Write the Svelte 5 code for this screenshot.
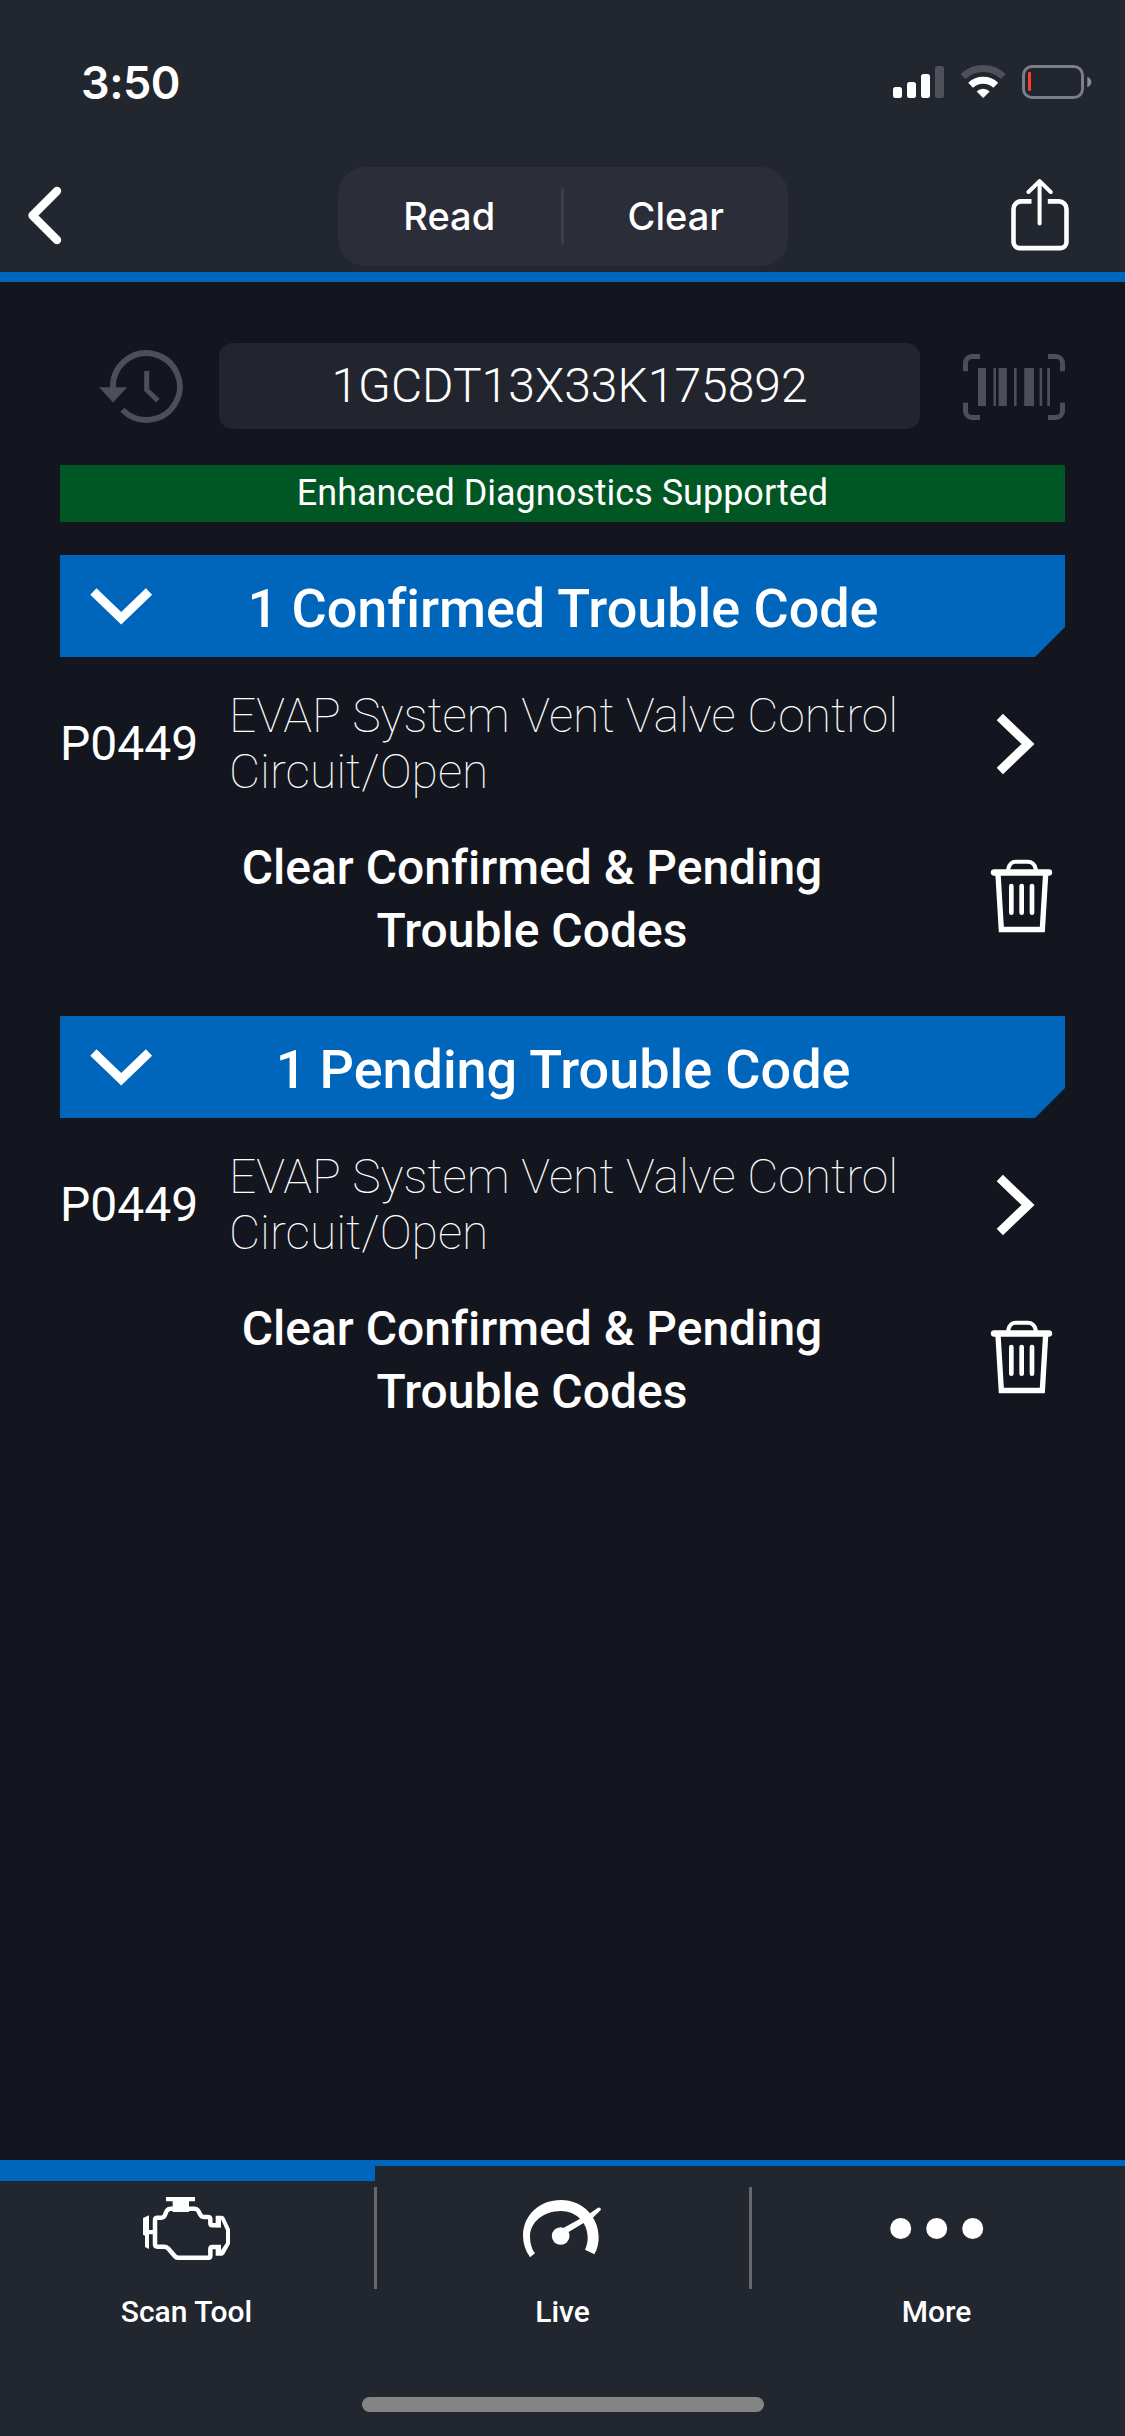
<script lang="ts">
  interface TroubleCode {
    code: string;
    description: string;
  }

  interface CodeGroup {
    title: string;
    codes: TroubleCode[];
  }

  const vin = "1GCDT13X33K175892";

  const description = "EVAP System Vent Valve Control Circuit/Open";

  const groups: CodeGroup[] = [
    { title: "1 Confirmed Trouble Code", codes: [{ code: "P0449", description }] },
    { title: "1 Pending Trouble Code", codes: [{ code: "P0449", description }] },
  ];

  const tabs = [
    { id: "scan", label: "Scan Tool" },
    { id: "live", label: "Live" },
    { id: "more", label: "More" },
  ];

  let activeTab = $state("scan");
</script>

<div class="screen">
  <header>
    <div class="status-bar">
      <span class="time">3:50</span>
      <svg class="status-icons" width="200" height="36" viewBox="0 0 200 36">
        <rect x="1" y="23" width="9" height="11" rx="2.5" fill="#fff" />
        <rect x="15" y="18" width="9" height="16" rx="2.5" fill="#fff" />
        <rect x="29" y="10" width="9" height="24" rx="2.5" fill="#fff" />
        <rect x="43" y="2" width="9" height="32" rx="2.5" fill="#4e5159" />
        <path d="M71 12.6a29 29 0 0 1 40.4 0" fill="none" stroke="#4e5159" stroke-width="7" />
        <path d="M78.6 21.2a18.4 18.4 0 0 1 25.2 0" fill="none" stroke="#fff" stroke-width="7" />
        <path d="M84.7 27.4a9.4 9.4 0 0 1 13 0L91.2 34z" fill="#fff" />
        <rect x="131.5" y="2.5" width="59" height="31" rx="8.5" fill="none" stroke="#7b7e84" stroke-width="3" />
        <path d="M195.3 12.7q4 1.8 4 5.3t-4 5.3z" fill="#8b8d93" />
        <rect x="136" y="8" width="3" height="19" rx="1" fill="#ff3b30" />
      </svg>
    </div>

    <nav class="nav-bar">
      <button class="icon-button" aria-label="Back">
        <svg width="36" height="60" viewBox="0 0 36 60">
          <path
            d="M31 5 6.5 29.5 31 54"
            fill="none"
            stroke="#fff"
            stroke-width="8.4"
            stroke-linecap="round"
            stroke-linejoin="round"
          />
        </svg>
      </button>
      <div class="segmented">
        <button>Read</button>
        <span class="separator"></span>
        <button>Clear</button>
      </div>
      <button class="icon-button share" aria-label="Share">
        <svg width="58" height="72" viewBox="0 0 58 72">
          <g fill="none" stroke="#fff" stroke-linecap="round" stroke-linejoin="round">
            <path
              d="M20.5 22.4H10a7.5 7.5 0 0 0-7.5 7.5v33.2a6 6 0 0 0 6 6h41a6 6 0 0 0 6-6V29.9a7.5 7.5 0 0 0-7.5-7.5H36.8"
              stroke-width="4.6"
              stroke-linecap="butt"
            />
            <path d="M28.6 44.5V2.5M17.5 13 28.6 2.1l11.1 10.9" stroke-width="4" />
          </g>
        </svg>
      </button>
    </nav>
  </header>

  <main>
    <div class="vin-row">
      <svg class="history" width="85" height="73" viewBox="0 0 85 73">
        <path d="M14 38A33.4 33.4 0 1 1 23.4 59.8" fill="none" stroke="#4c4f57" stroke-width="5.8" />
        <path d="M0 37.2h28.2L14.1 52.5z" fill="#4c4f57" />
        <path d="M47.7 21v19l11.2 10.6" fill="none" stroke="#4c4f57" stroke-width="5" />
      </svg>
      <div class="vin">{vin}</div>
      <svg class="barcode" width="102" height="66" viewBox="0 0 102 66">
        <path
          d="M17 2.5H9a6.5 6.5 0 0 0-6.5 6.5v8.3M85 2.5h8A6.5 6.5 0 0 1 99.5 9v8.3M17 63.5H9A6.5 6.5 0 0 1 2.5 57v-8.3M85 63.5h8a6.5 6.5 0 0 0 6.5-6.5v-8.3"
          fill="none"
          stroke="#4c4f57"
          stroke-width="5"
        />
        <path
          d="M15 14h8v38h-8zM30.5 14H33v38h-2.5zM35.6 14h8.2v38h-8.2zM51 14h2.6v38H51zM61.2 14H71v38h-9.8zM76.6 14h2.6v38h-2.6zM84.2 14H87v38h-2.8z"
          fill="#4c4f57"
        />
      </svg>
    </div>

    <div class="support-banner">Enhanced Diagnostics Supported</div>

    {#each groups as group}
      <section>
        <div class="group-header">
          <svg width="63" height="37" viewBox="0 0 63 37">
            <path d="M3.4 3.5 31.2 30.3 59 3.5" fill="none" stroke="#fff" stroke-width="9" />
          </svg>
          <h2>{group.title}</h2>
        </div>

        {#each group.codes as item}
          <div class="code-row">
            <span class="code">{item.code}</span>
            <span class="description">{item.description}</span>
            <svg width="39" height="62" viewBox="0 0 39 62">
              <path d="M3.8 4 32 31 3.8 58" fill="none" stroke="#fff" stroke-width="9" />
            </svg>
          </div>
        {/each}

        <div class="clear-row">
          <span class="clear-label">Clear Confirmed &amp; Pending Trouble Codes</span>
          <svg width="90" height="90" viewBox="0 0 270 270">
            <g fill="none" stroke="#fff" stroke-linecap="round">
              <path d="M85 64V56q5-21 22-21h36q19 0 24 21v8" stroke-width="12" stroke-linecap="butt" />
              <path d="M42 67.5H207" stroke-width="19" />
              <path d="M54 72 64 238.5H187L197 72" stroke-width="16" stroke-linecap="butt" />
              <path d="M94 108v80M125 108v80M156 108v80" stroke-width="14" />
            </g>
          </svg>
        </div>
      </section>
    {/each}
  </main>

  <footer>
    <div class="tabs">
      {#each tabs as tab}
        <button
          class="tab {tab.id}"
          class:active={activeTab === tab.id}
          onclick={() => (activeTab = tab.id)}
        >
          {#if tab.id === "scan"}
            <svg width="100" height="76" viewBox="0 0 300 228">
              <path d="M90 21h87v13h-18v18h-49V34H90z" fill="#fff" />
              <path
                d="M255 105.5h-26q-6 0-6-6V88q0-7-7-7h-12q-8 0-11-7l-6-11q-4-7-11-7h-71q-9 0-13 7l-5 12q-3 8-11 8H64q-7 0-7 7v73q0 7 7 7h20q7 0 12 5l20 23q4 5 10 5h91q6 0 6-6v-20q0-6 6-6h26"
                fill="none"
                stroke="#fff"
                stroke-width="13.5"
              />
              <path
                d="M239 77h18q6 0 8 5l17 36v43l-17 31q-3 5-8 5h-18v-32h16v16l15-22v-38l-15-33v24h-16z"
                fill="#fff"
              />
              <path d="M52 120v13H39v44l-12-6v-34l-6-3V84l18-8v44z" fill="#fff" />
              <path d="M110 50h49v16h-49z" fill="#fff" />
            </svg>
          {:else if tab.id === "live"}
            <svg width="100" height="76" viewBox="0 0 300 228">
              <path
                d="M42 202A114 114 0 0 1 21 138C21 74 72 30 135 30c65 0 113 51 113 112 0 18-4 37-13 51l-28-14c6-12 8-24 8-37 0-44-34-79-80-79-52 0-93 33-93 77 0 19 5 37 15 50z"
                fill="#fff"
              />
              <circle cx="134" cy="138" r="26.5" fill="#fff" />
              <path d="M138 116 222 70 246 53q8-2 9 6l-22 22-84 50z" fill="#fff" />
            </svg>
          {:else}
            <svg width="100" height="76" viewBox="0 0 100 76">
              <circle cx="13.7" cy="38.5" r="10.5" fill="#fff" />
              <circle cx="49.7" cy="38.5" r="10.5" fill="#fff" />
              <circle cx="85.7" cy="38.5" r="10.5" fill="#fff" />
            </svg>
          {/if}
          <span>{tab.label}</span>
        </button>
        {#if tab.id !== "more"}
          <div class="divider"></div>
        {/if}
      {/each}
    </div>
    <div class="home-indicator"></div>
  </footer>
</div>

<style>
  :global(body) {
    margin: 0;
    background: #13161e;
  }

  .screen {
    display: flex;
    flex-direction: column;
    width: 1125px;
    height: 2436px;
    overflow: hidden;
    background: #13161e;
    color: #fff;
    font-family: Roboto, sans-serif;
    font-variant-ligatures: none;
  }

  button {
    padding: 0;
    border: 0;
    background: none;
    color: inherit;
    font: inherit;
  }

  svg {
    display: block;
    flex-shrink: 0;
  }

  header {
    box-sizing: border-box;
    height: 282px;
    border-bottom: 10px solid #0066bb;
    background: #22262e;
    font-family: Inter, sans-serif;
  }

  .status-bar {
    display: flex;
    justify-content: space-between;
    align-items: center;
    height: 164px;
    padding: 0 33px 0 81px;
  }

  .time {
    font-size: 45px;
    font-weight: 600;
    letter-spacing: -0.5px;
  }

  .nav-bar {
    display: flex;
    justify-content: space-between;
    align-items: center;
    height: 104px;
    padding: 0 56px 0 26px;
  }

  .segmented {
    display: flex;
    align-items: center;
    width: 450px;
    height: 99px;
    margin-left: 52px;
    border-radius: 27px;
    background: #2b2e38;
  }

  .segmented button {
    flex: 1;
    font-size: 38px;
    font-weight: 500;
  }

  .separator {
    width: 3px;
    height: 57px;
    border-radius: 2px;
    background: #3b3e48;
  }

  .share {
    margin-top: -3px;
  }

  main {
    flex: 1;
    padding: 61px 60px 0;
  }

  .vin-row {
    display: flex;
    align-items: center;
    height: 86px;
  }

  .history {
    margin: 1px 35px 0 39px;
  }

  .vin {
    width: 701px;
    height: 86px;
    border-radius: 14px;
    background: #22252e;
    font-size: 48px;
    font-weight: 300;
    line-height: 86px;
    text-align: center;
  }

  .barcode {
    margin: 1px 0 0 auto;
  }

  .support-banner {
    height: 57px;
    margin: 36px 0 33px;
    background: #005724;
    font-size: 36px;
    line-height: 57px;
    text-align: center;
  }

  section {
    margin-bottom: 49px;
  }

  .group-header {
    display: flex;
    align-items: center;
    box-sizing: border-box;
    height: 102px;
    padding: 0 92px 0 30px;
    background: #0066bb;
    clip-path: polygon(0 0, 100% 0, 100% 72px, calc(100% - 30px) 100%, 0 100%);
  }

  h2 {
    flex: 1;
    margin: 4px 0 0;
    font-size: 54px;
    font-weight: 500;
    letter-spacing: -0.06px;
    text-align: center;
  }

  .code-row {
    display: flex;
    align-items: center;
    height: 174px;
    padding-right: 30px;
    font-size: 48px;
  }

  .code {
    width: 169px;
    margin-top: -2px;
  }

  .description {
    width: 700px;
    margin-right: auto;
    font-weight: 100;
    line-height: 56px;
  }

  .clear-row {
    display: flex;
    align-items: center;
    justify-content: flex-end;
    height: 136px;
  }

  .clear-label {
    width: 640px;
    margin-right: 128px;
    font-size: 48px;
    font-weight: 500;
    line-height: 63px;
    text-align: center;
  }

  .clear-row svg {
    margin: -9px -5px 0 0;
  }

  footer {
    box-sizing: border-box;
    height: 276px;
    border-top: 6px solid #0066bb;
    background: #22262e;
  }

  .tabs {
    display: flex;
    height: 231px;
  }

  .tab {
    display: flex;
    flex: 1;
    flex-direction: column;
    align-items: center;
    box-sizing: border-box;
    border-top: 15px solid transparent;
  }

  .tab.active {
    border-top-color: #0066bb;
  }

  /* zero net width, so the three tabs stay equal */
  .divider {
    width: 3px;
    height: 102px;
    margin: 21px -2px 0 -1px;
    background: #66686e;
  }

  .tab svg {
    margin-top: 9px;
  }

  .tab.scan svg {
    margin-right: 4px;
  }

  .tab.live svg {
    margin-left: 6px;
  }

  .tab.more svg,
  .tab.more span,
  .tab.scan span {
    margin-right: 2px;
  }

  .tab span {
    margin-top: 28px;
    font-size: 30px;
    font-weight: 500;
    line-height: 36px;
  }

  .home-indicator {
    width: 402px;
    height: 15px;
    margin: 0 auto;
    border-radius: 8px;
    background: #848484;
  }
</style>
